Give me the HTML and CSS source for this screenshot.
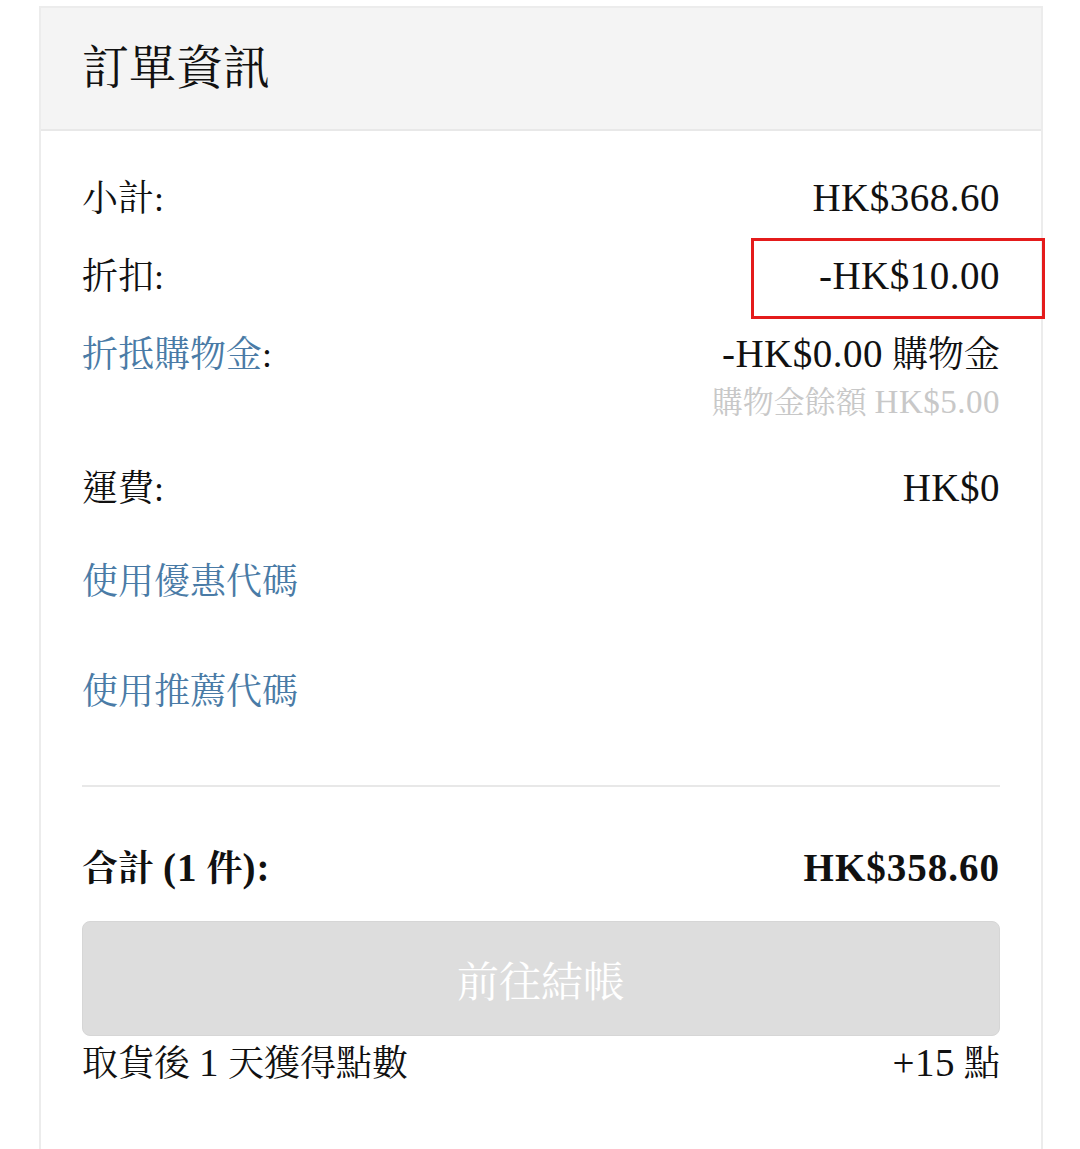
FILE: index.html
```html
<!DOCTYPE html>
<html lang="zh-Hant">
<head>
<meta charset="utf-8">
<title>訂單資訊</title>
<link rel="stylesheet" href="styles.css">
</head>
<body>
<div class="card">
  <div class="card-header">訂單資訊</div>
  <div class="card-body">
    <div class="row r-subtotal">
      <span>小計:</span>
      <span class="num">HK$368.60</span>
    </div>
    <div class="row r-discount">
      <span>折扣:</span>
      <span class="highlight num">-HK$10.00<span class="mark"></span></span>
    </div>
    <div class="row r-credit">
      <span class="link">折抵購物金<span class="dark">:</span></span>
      <div class="credit-val">
        <span><span class="num">-HK$0.00</span> 購物金</span>
        <span class="muted">購物金餘額 <span class="num-s">HK$5.00</span></span>
      </div>
    </div>
    <div class="row r-ship">
      <span>運費:</span>
      <span class="num">HK$0</span>
    </div>
    <div class="link r-coupon">使用優惠代碼</div>
    <div class="link r-referral">使用推薦代碼</div>
    <hr class="divider">
    <div class="row total">
      <span>合計 <span class="num">(1</span> 件<span class="num">):</span></span>
      <span class="num">HK$358.60</span>
    </div>
    <button class="checkout" disabled>前往結帳</button>
    <div class="row points">
      <span>取貨後 <span class="num">1</span> 天獲得點數</span>
      <span><span class="num">+15</span> 點</span>
    </div>
  </div>
</div>
</body>
</html>
```

FILE: styles.css
```css
html, body {
  margin: 0;
  padding: 0;
  background: #ffffff;
}
body {
  font-family: "Liberation Serif", "Noto Serif CJK TC", "Noto Sans CJK TC", serif;
  color: #111111;
  height: 1149px;
  overflow: hidden;
}
.card {
  margin: 6px 0 0 39px;
  width: 1000px;
  border: 2px solid #ececec;
  border-bottom: none;
  height: 1141px;
}
.card-header {
  background: #f4f4f4;
  height: 121px;
  border-bottom: 2px solid #e8e8e8;
  padding-left: 41px;
  font-size: 47px;
  line-height: 121px;
  color: #111;
}
.card-body {
  padding: 44px 41px 0 41px;
  font-size: 36px;
  line-height: 48px;
}
.num {
  font-size: 39px;
  line-height: 40px;
  letter-spacing: 0.5px;
}
.num-s {
  font-size: 33px;
  line-height: 36px;
  letter-spacing: 0.5px;
}
.row {
  display: flex;
  justify-content: space-between;
  align-items: baseline;
}
.r-discount { margin-top: 30px; }
.r-credit { margin-top: 30px; }
.r-ship { margin-top: 38px; }
.r-coupon { margin-top: 45px; }
.r-referral { margin-top: 62px; }
.link { color: #4a7ba6; }
.dark { color: #111; }
.credit-val {
  display: flex;
  flex-direction: column;
  align-items: flex-end;
}
.muted {
  color: #c8c8c8;
  font-size: 31px;
  line-height: 48px;
}
.highlight { position: relative; }
.mark {
  position: absolute;
  left: -68px;
  right: -45px;
  top: -18px;
  bottom: -23px;
  border: 3px solid #e41b1b;
}
.divider {
  margin: 69px 0 0 0;
  border: none;
  border-top: 2px solid #e8e8e8;
  height: 0;
}
.total {
  margin-top: 58px;
  font-weight: bold;
}
.total .num { letter-spacing: 1px; }
.checkout {
  display: block;
  width: 100%;
  margin-top: 28px;
  height: 115px;
  border: 1px solid #d6d6d6;
  border-radius: 8px;
  background: #dddddd;
  color: #ffffff;
  font-family: inherit;
  font-size: 42px;
  padding: 0;
}
.points { margin-top: 4px; }
```
